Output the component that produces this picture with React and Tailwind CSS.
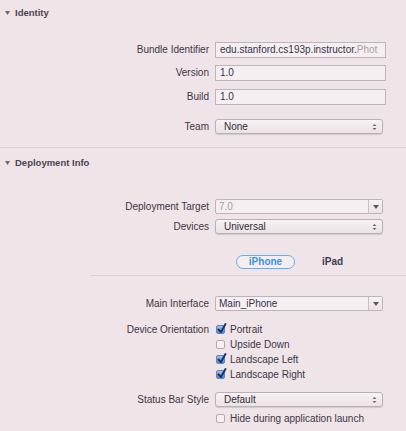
import React from 'react';

const font = { fontFamily: '"Liberation Sans", Arial, sans-serif' };

const Label = ({ children }) => (
    <div className="w-[209px] shrink-0 text-right text-[10px] text-[#3b3546] leading-none">{children}</div>
);

const TextField = ({ children }) => (
    <div className="w-[171px] h-[16px] border border-[#bdb3b8] bg-[#f6eff1] flex items-center pl-[4px] overflow-hidden whitespace-nowrap text-[10px] text-[#34324f] leading-none">
        {children}
    </div>
);

const Stepper = () => (
    <svg width="5" height="8" viewBox="0 0 5 8">
        <path d="M0.5 3 L2.5 1 L4.5 3 Z" fill="#6b6470" />
        <path d="M0.5 5 L2.5 7 L4.5 5 Z" fill="#6b6470" />
    </svg>
);

const Popup = ({ children }) => (
    <div className="w-[168px] h-[15px] rounded-[3px] border border-[#b9afb4] bg-gradient-to-b from-[#f8f2f4] to-[#ebe2e5] shadow-[0_1px_1px_rgba(0,0,0,0.12)] flex items-center pl-[8px] pr-[5px] text-[10px] text-[#2f2b3a] leading-none">
        <span className="flex-1">{children}</span>
        <Stepper />
    </div>
);

const Combo = ({ children, dim }) => (
    <div className="w-[168px] h-[15px] rounded-[2px] border border-[#bdb3b8] bg-[#f6eff1] flex items-stretch text-[10px] leading-none">
        <span className={`flex-1 flex items-center pl-[3px] ${dim ? 'text-[#a49ca3]' : 'text-[#34324f]'}`}>{children}</span>
        <span className="w-[14px] border-l border-[#c9c0c4] bg-gradient-to-b from-[#f8f2f4] to-[#ebe2e5] flex items-center justify-center">
            <svg width="6" height="4" viewBox="0 0 6 4">
                <path d="M0 0 L6 0 L3 4 Z" fill="#5d5763" />
            </svg>
        </span>
    </div>
);

const Check = ({ on, children }) => (
    <div className="h-[15px] flex items-center">
        <div className="w-[209px] shrink-0" />
        <div className="ml-[7px] flex items-center gap-[5px]">
            <div className={`relative w-[9px] h-[9px] rounded-[2px] border ${on ? 'border-[#5b86c4] bg-gradient-to-b from-[#9cc1ee] to-[#4f86d2]' : 'border-[#b3aab0] bg-[#f7f1f3]'}`}>
                {on && (
                    <svg className="absolute left-[0px] top-[-3px]" width="10" height="11" viewBox="0 0 10 11">
                        <path d="M1.5 6.5 L4 9 L8.5 1" fill="none" stroke="#1f2d55" strokeWidth="1.8" strokeLinecap="round" strokeLinejoin="round" />
                    </svg>
                )}
            </div>
            <span className="text-[10px] text-[#3b3546] leading-none">{children}</span>
        </div>
    </div>
);

const Row = ({ label, children, className = '' }) => (
    <div className={`flex items-center gap-[6px] ${className}`}>
        <Label>{label}</Label>
        {children}
    </div>
);

const Header = ({ children, className = '' }) => (
    <div className={`flex items-center gap-[5px] pl-[5px] ${className}`}>
        <svg width="5" height="4" viewBox="0 0 5 4">
            <path d="M0 0 L5 0 L2.5 4 Z" fill="#6d6672" />
        </svg>
        <span className="text-[9.5px] font-bold text-[#4a4455]">{children}</span>
    </div>
);

export default function App() {
    return (
        <div className="w-[406px] h-[431px] overflow-hidden bg-[#efe5e8]" style={font}>
            <Header className="h-[26px]">Identity</Header>

            <Row label="Bundle Identifier" className="mt-[16px]">
                <TextField>
                    edu.stanford.cs193p.instructor.<span className="text-[#a9a1a8]">Phot</span>
                </TextField>
            </Row>
            <Row label="Version" className="mt-[7px]">
                <TextField>1.0</TextField>
            </Row>
            <Row label="Build" className="mt-[8px]">
                <TextField>1.0</TextField>
            </Row>
            <Row label="Team" className="mt-[14px]">
                <Popup>None</Popup>
            </Row>

            <div className="mt-[13px] h-px bg-[#d9ced3]" />

            <Header className="h-[30px]">Deployment Info</Header>

            <Row label="Deployment Target" className="mt-[21px]">
                <Combo dim>7.0</Combo>
            </Row>
            <Row label="Devices" className="mt-[5px]">
                <Popup>Universal</Popup>
            </Row>

            <div className="mt-[21px] flex items-center h-[14px]">
                <div className="ml-[236px] w-[59px] h-[14px] rounded-full border-[1.5px] border-[#67aee8] bg-[#f4eef2] flex items-center justify-center text-[10px] font-bold text-[#3d92e0] leading-none">
                    iPhone
                </div>
                <span className="ml-[27px] text-[10px] font-bold text-[#3e3a4c] leading-none">iPad</span>
            </div>

            <div className="mt-[6px] ml-[91px] h-px bg-[#d9ced3]" />

            <Row label="Main Interface" className="mt-[20px]">
                <Combo>Main_iPhone</Combo>
            </Row>

            <div className="mt-[11px] relative">
                <div className="absolute left-0 top-[3px] w-[209px] text-right text-[10px] text-[#3b3546] leading-none">Device Orientation</div>
                <Check on>Portrait</Check>
                <Check>Upside Down</Check>
                <Check on>Landscape Left</Check>
                <Check on>Landscape Right</Check>
            </div>

            <Row label="Status Bar Style" className="mt-[10px]">
                <Popup>Default</Popup>
            </Row>
            <div className="mt-[4px]">
                <Check>Hide during application launch</Check>
            </div>
        </div>
    );
}
